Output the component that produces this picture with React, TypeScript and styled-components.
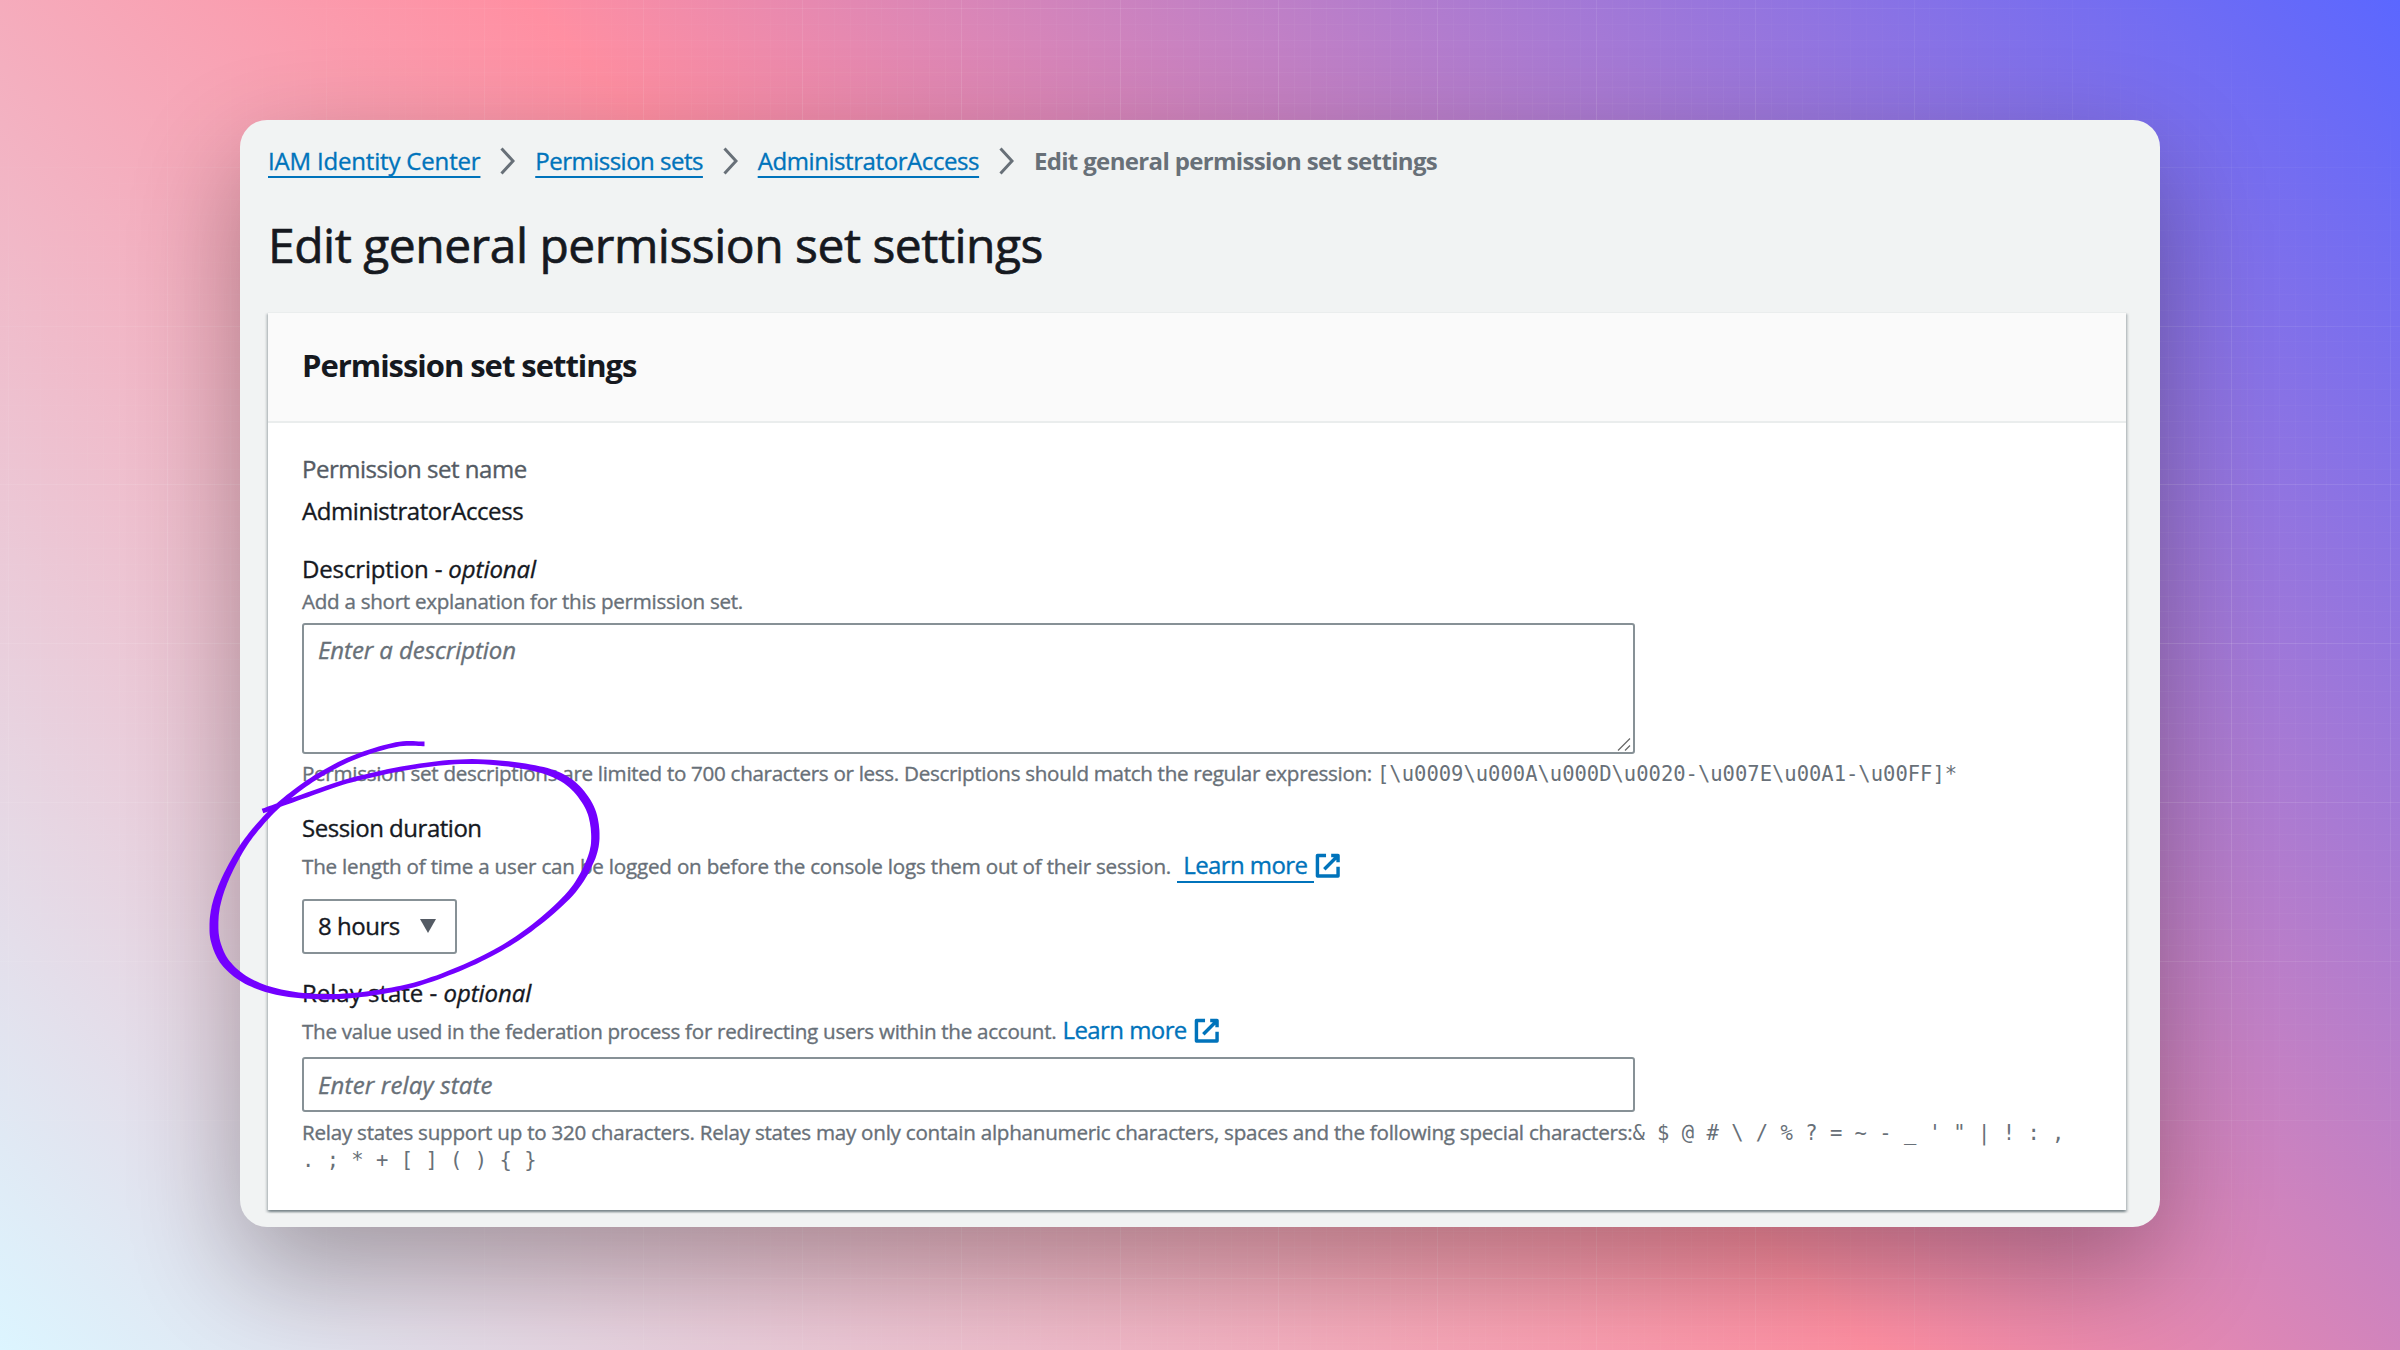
import React from 'react';
import styled, { createGlobalStyle } from 'styled-components';

const GlobalStyle = createGlobalStyle`
  * { box-sizing: border-box; }
  html, body { margin: 0; padding: 0; }
  body {
    font-family: "Open Sans", "Noto Sans", sans-serif;
    color: #16191f;
    -webkit-text-stroke: 0.35px currentColor;
  }
  h1, h2, p { margin: 0; }
`;

const Backdrop = styled.main`
  position: relative;
  width: 2400px;
  height: 1350px;
  padding: 120px 240px;
  overflow: hidden;
  background: linear-gradient(45deg, #dcf5ff 0%, #ff8fa2 50%, #5b67ff 100%);
`;

const GridLines = styled.div`
  position: absolute;
  inset: 0;
  background:
    repeating-linear-gradient(90deg, rgba(255, 255, 255, 0.13) 0 1px, transparent 1px 158.8px) 8px 0,
    repeating-linear-gradient(180deg, rgba(255, 255, 255, 0.13) 0 1px, transparent 1px 158.8px) 0 8px,
    repeating-linear-gradient(90deg, rgba(255, 255, 255, 0.055) 0 1px, transparent 1px 15.88px) 8px 0,
    repeating-linear-gradient(180deg, rgba(255, 255, 255, 0.055) 0 1px, transparent 1px 15.88px) 0 8px;
  mask-image: radial-gradient(ellipse at center, #000 50%, transparent 93%);
`;

const Panel = styled.section`
  position: relative;
  width: 1920px;
  height: 1107px;
  padding: 24px 34px 0 28px;
  border-radius: 27px;
  background: #f1f3f3;
  box-shadow: 0 42px 110px rgba(0, 0, 0, 0.3);
`;

const Breadcrumbs = styled.nav`
  display: flex;
  align-items: center;
  height: 34px;
  font-size: 24px;
  line-height: 34px;
  white-space: nowrap;
`;

const CrumbLink = styled.a<{ $tracking: number }>`
  color: #0073bb;
  letter-spacing: ${(p) => p.$tracking}em;
  text-decoration: underline;
  text-decoration-thickness: 2px;
  text-underline-offset: 6px;
  text-decoration-skip-ink: none;
`;

const CrumbCurrent = styled.span`
  color: #687078;
  font-weight: 700;
  letter-spacing: -0.0272em;
  -webkit-text-stroke: 0;
`;

const Chevron = styled.svg`
  width: 15px;
  height: 28px;
  margin: 0 19.9px;
  flex: none;
  fill: none;
  stroke: #687078;
  stroke-width: 3;
`;

const PageTitle = styled.h1`
  margin-top: 36px;
  font-size: 48px;
  font-weight: 400;
  line-height: 62px;
  letter-spacing: -0.0105em;
  white-space: nowrap;
  -webkit-text-stroke: 0.65px currentColor;
`;

const Card = styled.section`
  height: 898px;
  margin-top: 36px;
  background: #fff;
  box-shadow: 0 2px 2px rgba(0, 28, 36, 0.3), 2px 2px 2px rgba(0, 28, 36, 0.15), -2px 2px 2px rgba(0, 28, 36, 0.15);
`;

const CardHeader = styled.header`
  height: 111px;
  padding: 33px 34px 0;
  border-top: 1px solid #eaeded;
  border-bottom: 2px solid #eaeded;
  background: #fafafa;
`;

const CardTitle = styled.h2`
  font-size: 31px;
  font-weight: 700;
  line-height: 38px;
  letter-spacing: -0.0335em;
  -webkit-text-stroke: 0;
`;

const CardBody = styled.div`
  display: flex;
  flex-direction: column;
  align-items: flex-start;
  padding: 29px 34px 0;
  white-space: nowrap;
`;

const Label = styled.div<{ $muted?: boolean; $gap?: number; $tracking?: number }>`
  margin-top: ${(p) => p.$gap ?? 0}px;
  color: ${(p) => (p.$muted ? '#545b64' : '#16191f')};
  font-size: 24px;
  line-height: 34px;
  letter-spacing: ${(p) => p.$tracking ?? -0.02}em;

  em { letter-spacing: -0.003em; }
`;

const Hint = styled.p<{ $gap: number; $tall?: boolean; $tracking: number }>`
  margin-top: ${(p) => p.$gap}px;
  color: #687078;
  font-size: 20.6px;
  line-height: ${(p) => (p.$tall ? 34 : 27.5)}px;
  letter-spacing: ${(p) => p.$tracking}em;
`;

const Code = styled.code`
  font-family: "DejaVu Sans Mono", monospace;
  font-size: 20.5px;
  line-height: 1;
  letter-spacing: 0;
  white-space: pre;
  -webkit-text-stroke: 0;
`;

const LearnMore = styled.a<{ $underlined?: boolean }>`
  color: #0073bb;
  font-size: 24px;
  line-height: 1;
  letter-spacing: -0.024em;

  span {
    margin-left: 1px;
    padding: ${(p) => (p.$underlined ? '0 6px' : '0')};
    margin-right: ${(p) => (p.$underlined ? 0 : 6.5)}px;
    border-bottom: ${(p) => (p.$underlined ? '2px solid #0073bb' : '0')};
  }
`;

const ExternalIcon = styled.svg`
  width: 27.5px;
  height: 27.5px;
  vertical-align: -5.5px;
  fill: none;
  stroke: #0073bb;
  stroke-width: 2;
`;

const Field = styled.div<{ $gap: number; $height: number }>`
  display: flex;
  align-items: flex-end;
  justify-content: space-between;
  width: 1333px;
  height: ${(p) => p.$height}px;
  margin-top: ${(p) => p.$gap}px;
  padding-left: 14px;
  border: 2px solid #879196;
  border-radius: 3px;
`;

const Placeholder = styled.span<{ $top: number; $tracking: number }>`
  align-self: flex-start;
  padding-top: ${(p) => p.$top}px;
  color: #687078;
  font-size: 24px;
  font-style: italic;
  line-height: 34px;
  letter-spacing: ${(p) => p.$tracking}em;
`;

const ResizeGrip = styled.svg`
  width: 16px;
  height: 15px;
  fill: none;
  stroke: #6b6b6b;
  stroke-width: 1.3;
`;

const Select = styled.div`
  display: flex;
  align-items: center;
  justify-content: space-between;
  width: 155px;
  height: 55px;
  margin-top: 16px;
  padding: 0 18px 0 14px;
  border: 2px solid #879196;
  border-radius: 3px;
  font-size: 24px;
  line-height: 34px;
  letter-spacing: -0.02em;
`;

const Caret = styled.svg`
  width: 18px;
  height: 16px;
  fill: #545b64;
`;

const Annotation = styled.svg`
  position: absolute;
  left: 0;
  top: 0;
  width: 2400px;
  height: 1350px;
  fill: #7300ff;
  pointer-events: none;
`;

/* Pen positions of the hand-drawn ring: x, y and nib width. */
const ringPoints: [number, number, number][] = [
  [424.5, 743.9, 4.6], [396, 744.6, 4.6], [351.8, 758.3, 4.6], [311.6, 780, 5], [280, 804, 5.2],
  [261.5, 822.5, 5.5], [243.8, 845, 6], [227.5, 874, 7], [217.5, 900, 8], [214, 922, 8.8], [216, 943, 9],
  [226.5, 964, 8.4], [249.5, 982, 7.2],
  [284.8, 993.3, 6], [334, 996.7, 5.2], [387.5, 990.7, 4.8], [432, 979.3, 4.6], [485.7, 956.7, 4.8],
  [530, 929.3, 5.2], [570.5, 893.3, 6.4], [590.6, 860, 7.6], [595.3, 833.3, 8.4], [588.4, 805, 8.6],
  [566, 780, 7.8], [530, 767.3, 5.8], [472, 761.5, 4.8], [414, 766.7, 4.6], [351.8, 780, 4.6],
  [307, 795, 4.6], [262.5, 811, 4.6],
];

function brushPath(points: [number, number, number][]): string {
  const samples: number[][] = [];
  const at = (i: number) => points[Math.max(0, Math.min(points.length - 1, i))];
  for (let i = 0; i < points.length - 1; i++) {
    const steps = i === points.length - 2 ? 11 : 10;
    for (let s = 0; s < steps; s++) {
      const t = s / 10;
      samples.push([0, 1, 2].map((k) => {
        const [a, b, c, d] = [at(i - 1)[k], at(i)[k], at(i + 1)[k], at(i + 2)[k]];
        return 0.5 * (2 * b + (c - a) * t + (2 * a - 5 * b + 4 * c - d) * t * t + (3 * b - a - 3 * c + d) * t * t * t);
      }));
    }
  }
  const left: string[] = [];
  const right: string[] = [];
  samples.forEach(([x, y, w], i) => {
    const p = samples[Math.max(0, i - 1)];
    const n = samples[Math.min(samples.length - 1, i + 1)];
    const len = Math.hypot(n[0] - p[0], n[1] - p[1]) || 1;
    const dx = (-(n[1] - p[1]) / len) * (w / 2);
    const dy = ((n[0] - p[0]) / len) * (w / 2);
    left.push(`${(x + dx).toFixed(1)} ${(y + dy).toFixed(1)}`);
    right.unshift(`${(x - dx).toFixed(1)} ${(y - dy).toFixed(1)}`);
  });
  return `M${left.join('L')}L${right.join('L')}Z`;
}

const Separator = () => (
  <Chevron viewBox="0 0 15 28"><path d="M1.5 1.5 13 14 1.5 26.5" /></Chevron>
);

const External = () => (
  <ExternalIcon viewBox="0 0 16 16"><path d="M10 2h4v4M6 10l8-8M14 8.6V14H2V2h5" strokeLinejoin="round" /></ExternalIcon>
);

export default function App() {
  return (
    <>
      <GlobalStyle />
      <Backdrop>
        <GridLines />
        <Panel>
          <Breadcrumbs>
            <CrumbLink $tracking={-0.0075}>IAM Identity Center</CrumbLink>
            <Separator />
            <CrumbLink $tracking={-0.021}>Permission sets</CrumbLink>
            <Separator />
            <CrumbLink $tracking={-0.0175}>AdministratorAccess</CrumbLink>
            <Separator />
            <CrumbCurrent>Edit general permission set settings</CrumbCurrent>
          </Breadcrumbs>
          <PageTitle>Edit general permission set settings</PageTitle>
          <Card>
            <CardHeader><CardTitle>Permission set settings</CardTitle></CardHeader>
            <CardBody>
              <Label $muted>Permission set name</Label>
              <Label $gap={7.5} $tracking={-0.018}>AdministratorAccess</Label>
              <Label $gap={24} $tracking={-0.006}>Description - <em>optional</em></Label>
              <Hint $gap={2} $tracking={-0.0137}>Add a short explanation for this permission set.</Hint>
              <Field $gap={8} $height={131}>
                <Placeholder $top={7.5} $tracking={-0.003}>Enter a description</Placeholder>
                <ResizeGrip viewBox="0 0 16 15"><path d="M1 13.5 13 1.5M8 13.5 13 8.5" /></ResizeGrip>
              </Field>
              <Hint $gap={6} $tracking={-0.0146}>
                Permission set descriptions are limited to 700 characters or less. Descriptions should match the regular expression:{' '}
                <Code>{'[\\u0009\\u000A\\u000D\\u0020-\\u007E\\u00A1-\\u00FF]*'}</Code>
              </Hint>
              <Label $gap={23}>Session duration</Label>
              <Hint $gap={4} $tall $tracking={-0.0096}>
                The length of time a user can be logged on before the console logs them out of their session.{' '}
                <LearnMore $underlined><span>Learn more</span><External /></LearnMore>
              </Hint>
              <Select>8 hours<Caret viewBox="0 0 18 16"><path d="M1 1h16L9 15z" /></Caret></Select>
              <Label $gap={22} $tracking={0}>Relay state - <em>optional</em></Label>
              <Hint $gap={4.5} $tall $tracking={-0.0136}>
                The value used in the federation process for redirecting users within the account.{' '}
                <LearnMore><span>Learn more</span><External /></LearnMore>
              </Hint>
              <Field $gap={9} $height={55}><Placeholder $top={8.5} $tracking={0.007}>Enter relay state</Placeholder></Field>
              <Hint $gap={6.7} $tracking={-0.0118}>
                Relay states support up to 320 characters. Relay states may only contain alphanumeric characters, spaces and the following special characters:
                <Code>{' & $ @ # \\ / % ? = ~ - _ \' " | ! : ,\n. ; * + [ ] ( ) { }'.trimStart()}</Code>
              </Hint>
            </CardBody>
          </Card>
        </Panel>
        <Annotation viewBox="0 0 2400 1350"><path d={brushPath(ringPoints)} /></Annotation>
      </Backdrop>
    </>
  );
}
